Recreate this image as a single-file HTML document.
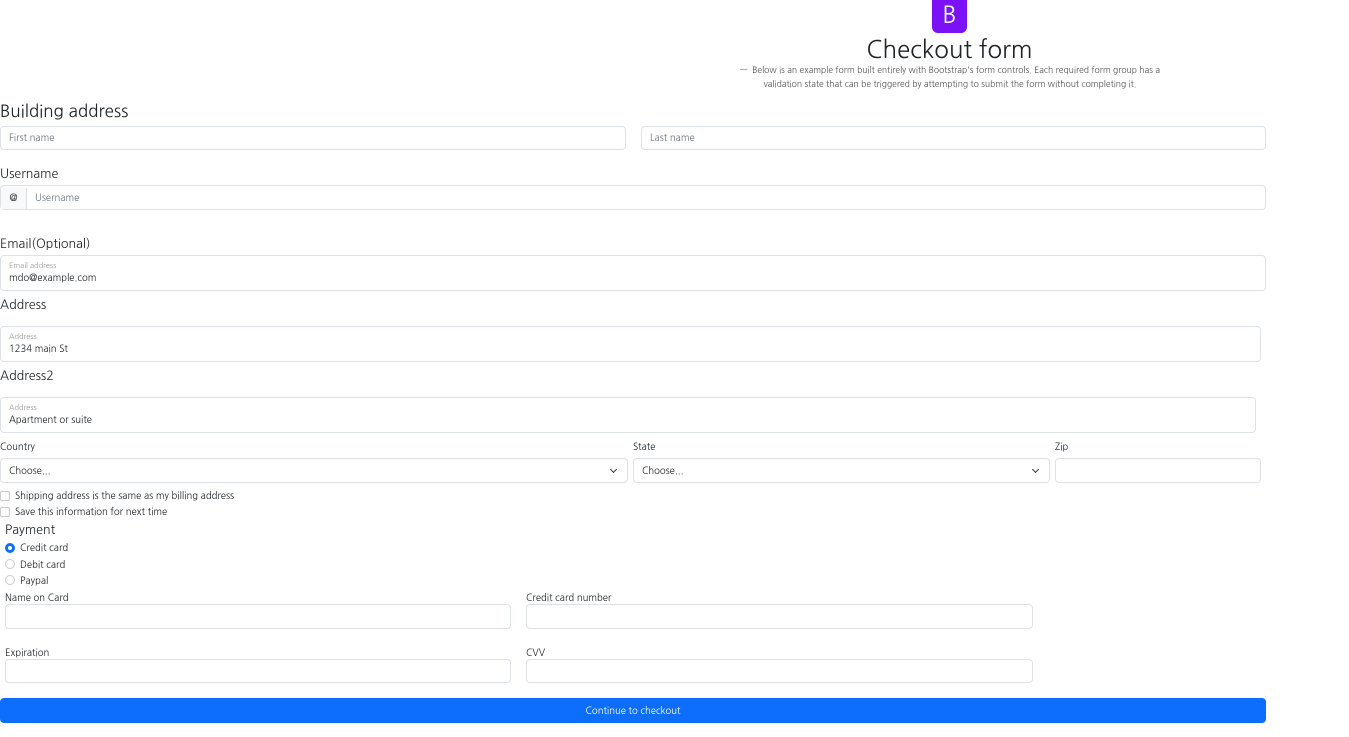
<!DOCTYPE html>
<html><head><meta charset="utf-8"><style>
*{box-sizing:border-box;margin:0;padding:0}
body{width:1349px;height:737px;background:#fff;font-family:"NanumGothic","Liberation Sans",sans-serif;color:#212529;position:relative;overflow:hidden}
.a{position:absolute}
.in{position:absolute;border:1px solid #dee2e6;border-radius:4px;background:#fff;font-size:9.5px;color:#6c757d;padding-left:8px;display:flex;align-items:center;padding-top:1px}
.l{position:absolute;font-size:12.5px}
.s{position:absolute;font-size:9.5px}
.fl{position:absolute;border:1px solid #dee2e6;border-radius:4px;padding:6px 8px}
.fl small{display:block;font-size:7.5px;line-height:10px;color:#999;margin-bottom:1px}
.fl span{display:block;font-size:9.5px;line-height:12px;color:#212529}
.cb{position:absolute;width:10px;height:10px;border:1px solid #ccc;border-radius:2px}
.rd{position:absolute;width:10px;height:10px;border:1px solid #ccc;border-radius:50%}
.chev{position:absolute;right:11px;top:8px;width:5px;height:5px;border-right:1.2px solid #333;border-bottom:1.2px solid #333;transform:rotate(45deg)}
</style></head><body>
<div class="a" style="left:932px;top:0;width:35px;height:33px;background:#7b12f5;border-radius:0 0 6px 6px;color:#fff;font-size:23px;text-align:center;line-height:32px">B</div>
<div class="a" style="left:0;width:1899px;top:34px;text-align:center;font-size:24px;line-height:32px">Checkout form</div>
<div class="a" style="left:733px;width:434px;top:64px;text-align:center;font-size:8.6px;line-height:14px;color:#555">—&nbsp; Below is an example form built entirely with Bootstrap's form controls. Each required form group has a validation state that can be triggered by attempting to submit the form without completing it.</div>
<div class="a" style="left:0;top:101px;font-size:17px">Building address</div>
<div class="in" style="left:0;top:126px;width:626px;height:24px">First name</div>
<div class="in" style="left:641px;top:126px;width:625px;height:24px">Last name</div>
<div class="l" style="left:0;top:166px">Username</div>
<div class="in" style="left:0;top:185px;width:1266px;height:25px;padding-left:0;padding-top:2px"><span style="width:26px;height:100%;border-right:1px solid #dee2e6;background:#f8f9fa;color:#212529;display:flex;align-items:center;justify-content:center">@</span><span style="padding-left:8px">Username</span></div>
<div class="l" style="left:0;top:236px">Email(Optional)</div>
<div class="fl" style="left:0;top:255px;width:1266px;height:36px"><small>Email address</small><span>mdo@example.com</span></div>
<div class="l" style="left:0;top:297px">Address</div>
<div class="fl" style="left:0;top:326px;width:1261px;height:36px"><small>Address</small><span>1234 main St</span></div>
<div class="l" style="left:0;top:368px">Address2</div>
<div class="fl" style="left:0;top:397px;width:1256px;height:36px"><small>Address</small><span>Apartment or suite</span></div>
<div class="s" style="left:0;top:442px">Country</div>
<div class="s" style="left:633px;top:442px">State</div>
<div class="s" style="left:1055px;top:442px">Zip</div>
<div class="in" style="left:0;top:458px;width:628px;height:25px;color:#212529;padding-top:2px">Choose...<i class="chev"></i></div>
<div class="in" style="left:633px;top:458px;width:417px;height:25px;color:#212529;padding-top:2px">Choose...<i class="chev"></i></div>
<div class="in" style="left:1055px;top:458px;width:206px;height:25px"></div>
<div class="cb" style="left:0;top:491px"></div><div class="s" style="left:15px;top:491px">Shipping address is the same as my billing address</div>
<div class="cb" style="left:0;top:507px"></div><div class="s" style="left:15px;top:507px">Save this information for next time</div>
<div class="l" style="left:5px;top:522px">Payment</div>
<div class="rd" style="left:5px;top:543px;border:3px solid #0d6efd"></div><div class="s" style="left:20px;top:543px">Credit card</div>
<div class="rd" style="left:5px;top:559px"></div><div class="s" style="left:20px;top:560px">Debit card</div>
<div class="rd" style="left:5px;top:575px"></div><div class="s" style="left:20px;top:576px">Paypal</div>
<div class="s" style="left:5px;top:593px">Name on Card</div>
<div class="s" style="left:526px;top:593px">Credit card number</div>
<div class="in" style="left:5px;top:604px;width:506px;height:25px"></div>
<div class="in" style="left:526px;top:604px;width:507px;height:25px"></div>
<div class="s" style="left:5px;top:648px">Expiration</div>
<div class="s" style="left:526px;top:648px">CVV</div>
<div class="in" style="left:5px;top:659px;width:506px;height:24px"></div>
<div class="in" style="left:526px;top:659px;width:507px;height:24px"></div>
<div class="a" style="left:0;top:698px;width:1266px;height:25px;background:#0d6efd;border-radius:4px;color:#fff;font-size:9.5px;text-align:center;line-height:27px">Continue to checkout</div>
</body></html>
